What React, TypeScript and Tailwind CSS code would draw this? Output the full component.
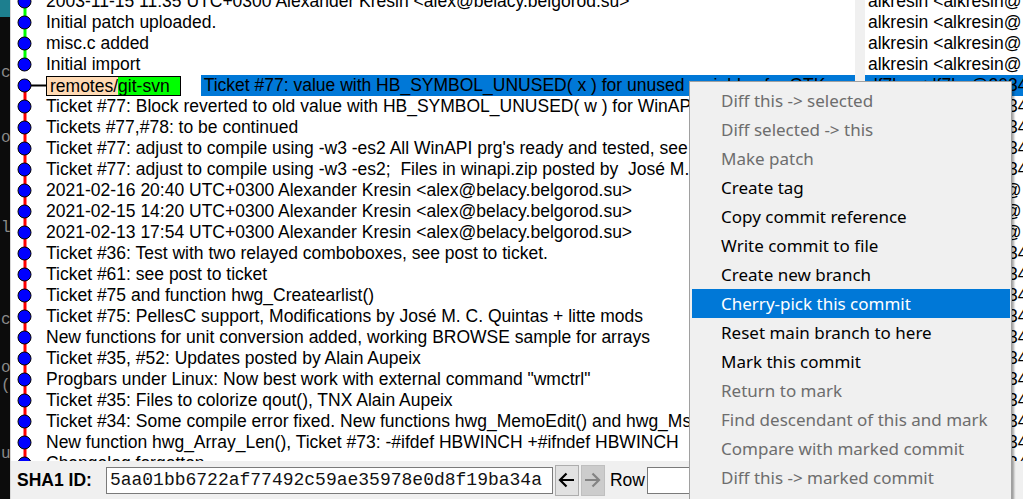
import React from "react";

type Kind = "green" | "greenEnd" | "redStart" | "red";

const AK = "alkresin <alkresin@ 7b1c9bd3-8a4c-0410-a8a9-d8a2ec2ab3e0>";
const DF = "df7be <df7be@2034ea8a-0c40-0410-a8a9-d8a2ec2ab3e0>";

const mainRows: { text: string; kind: Kind; author: string }[] = [
  { text: "2003-11-15 11:35 UTC+0300 Alexander Kresin <alex@belacy.belgorod.su>", kind: "green", author: AK },
  { text: "Initial patch uploaded.", kind: "green", author: AK },
  { text: "misc.c added", kind: "green", author: AK },
  { text: "Initial import", kind: "greenEnd", author: AK },
  { text: "Ticket #77: value with HB_SYMBOL_UNUSED( x ) for unused variables for GTK", kind: "redStart", author: DF },
  { text: "Ticket #77: Block reverted to old value with HB_SYMBOL_UNUSED( w ) for WinAPI, it is not working", kind: "red", author: DF },
  { text: "Tickets #77,#78: to be continued", kind: "red", author: DF },
  { text: "Ticket #77: adjust to compile using -w3 -es2 All WinAPI prg's ready and tested, see ticket", kind: "red", author: DF },
  { text: "Ticket #77: adjust to compile using -w3 -es2;  Files in winapi.zip posted by  José M. C. Quintas", kind: "red", author: DF },
  { text: "2021-02-16 20:40 UTC+0300 Alexander Kresin <alex@belacy.belgorod.su>", kind: "red", author: AK },
  { text: "2021-02-15 14:20 UTC+0300 Alexander Kresin <alex@belacy.belgorod.su>", kind: "red", author: AK },
  { text: "2021-02-13 17:54 UTC+0300 Alexander Kresin <alex@belacy.belgorod.su>", kind: "red", author: AK },
  { text: "Ticket #36: Test with two relayed comboboxes, see post to ticket.", kind: "red", author: DF },
  { text: "Ticket #61: see post to ticket", kind: "red", author: DF },
  { text: "Ticket #75 and function hwg_Createarlist()", kind: "red", author: DF },
  { text: "Ticket #75: PellesC support, Modifications by José M. C. Quintas + litte mods", kind: "red", author: DF },
  { text: "New functions for unit conversion added, working BROWSE sample for arrays", kind: "red", author: DF },
  { text: "Ticket #35, #52: Updates posted by Alain Aupeix", kind: "red", author: DF },
  { text: "Progbars under Linux: Now best work with external command \"wmctrl\"", kind: "red", author: DF },
  { text: "Ticket #35: Files to colorize qout(), TNX Alain Aupeix", kind: "red", author: DF },
  { text: "Ticket #34: Some compile error fixed. New functions hwg_MemoEdit() and hwg_MsgYesNoCancel()", kind: "red", author: DF },
  { text: "New function hwg_Array_Len(), Ticket #73: -#ifdef HBWINCH +#ifndef HBWINCH", kind: "red", author: DF },
  { text: "Changelog forgotten", kind: "red", author: DF },
];

const menuItems: { label: string; enabled: boolean; active?: boolean }[] = [
  { label: "Diff this -> selected", enabled: false },
  { label: "Diff selected -> this", enabled: false },
  { label: "Make patch", enabled: false },
  { label: "Create tag", enabled: true },
  { label: "Copy commit reference", enabled: true },
  { label: "Write commit to file", enabled: true },
  { label: "Create new branch", enabled: true },
  { label: "Cherry-pick this commit", enabled: true, active: true },
  { label: "Reset main branch to here", enabled: true },
  { label: "Mark this commit", enabled: true },
  { label: "Return to mark", enabled: false },
  { label: "Find descendant of this and mark", enabled: false },
  { label: "Compare with marked commit", enabled: false },
  { label: "Diff this -> marked commit", enabled: false },
];

const termLines: { h: number; t?: string }[] = [
  { h: 48 },
  { h: 18, t: "cl" },
  { h: 47 },
  { h: 16, t: "o)" },
  { h: 74 },
  { h: 16, t: "l" },
  { h: 76 },
  { h: 14, t: "c" },
  { h: 34 },
  { h: 18, t: "ol" },
  { h: 18, t: "(" },
  { h: 50 },
  { h: 18, t: "u" },
];

function Graph({ kind }: { kind: Kind }) {
  return (
    <svg width="35" height="21" viewBox="0 0 35 21" className="shrink-0 block">
      {kind === "green" && <line x1="14" y1="0" x2="14" y2="21" stroke="#00ff00" strokeWidth="3" />}
      {kind === "greenEnd" && <line x1="14" y1="0" x2="14" y2="10.5" stroke="#00ff00" strokeWidth="3" />}
      {kind === "red" && <line x1="14" y1="0" x2="14" y2="21" stroke="#ff0000" strokeWidth="3" />}
      {kind === "redStart" && (
        <>
          <line x1="14" y1="10.5" x2="14" y2="21" stroke="#ff0000" strokeWidth="3" />
          <line x1="14" y1="10.5" x2="35" y2="10.5" stroke="#000000" strokeWidth="2" />
        </>
      )}
      <circle cx="13.5" cy="10.5" r="6.5" fill="#0000ff" stroke="#000000" strokeWidth="1" />
    </svg>
  );
}

export default function App() {
  return (
    <div className="w-[1023px] h-[499px] flex overflow-hidden bg-[#f0f0f0] font-['Liberation_Sans',Arial,sans-serif] text-black">
      {/* background terminal strip */}
      <div className="w-[10px] shrink-0 bg-[#0c0c0c] flex flex-col overflow-hidden">
        <div className="h-[17px] shrink-0 bg-[#1d7f8f]" />
        {termLines.map((l, i) => (
          <div
            key={i}
            style={{ height: l.h }}
            className="shrink-0 overflow-hidden whitespace-nowrap text-[#8a8a8a] font-['Liberation_Mono',monospace] text-[16px] leading-[16px] pl-[1px]"
          >
            {l.t ?? ""}
          </div>
        ))}
      </div>

      {/* window */}
      <div className="flex-1 flex flex-col border-l border-[#d8d8d8] relative min-w-0">
        <div className="flex-1 min-h-0 flex">
          {/* commit list */}
          <div className="w-[844px] shrink-0 bg-white overflow-hidden">
            <div className="mt-[-9px] flex flex-col">
              {mainRows.map((r, i) => (
                <div key={i} className="h-[21px] flex items-center text-[17.5px] leading-[21px] whitespace-pre">
                  <Graph kind={r.kind} />
                  {r.kind === "redStart" ? (
                    <>
                      <div className="h-[20px] flex border border-black leading-[18px]">
                        <span className="bg-[#ffdab4] pl-[3px]">remotes/</span>
                        <span className="bg-[#00ff00] pr-[10px]">git-svn</span>
                      </div>
                      <div className="ml-[20px] flex-1 h-[21px] bg-[#0078d7] pl-[3px]">{r.text}</div>
                    </>
                  ) : (
                    <span>{r.text}</span>
                  )}
                </div>
              ))}
            </div>
          </div>
          <div className="w-[10px] shrink-0 bg-[#f0f0f0]" />
          {/* author column */}
          <div className="flex-1 min-w-0 bg-white overflow-hidden">
            <div className="mt-[-9px] flex flex-col">
              {mainRows.map((r, i) => (
                <div
                  key={i}
                  className={
                    "h-[21px] text-[17.5px] leading-[21px] whitespace-pre pl-[3px] " +
                    (r.kind === "redStart" ? "bg-[#0078d7]" : "")
                  }
                >
                  {r.author}
                </div>
              ))}
            </div>
          </div>
        </div>

        {/* bottom bar */}
        <div className="h-[38px] shrink-0 bg-[#f0f0f0] flex items-center">
          <span className="ml-[6px] font-bold text-[17.5px] whitespace-nowrap">SHA1 ID:</span>
          <div className="ml-[14px] w-[447px] h-[27px] bg-white border border-[#7a7a7a] flex items-center pl-[3px] font-['Liberation_Mono',monospace] text-[18px] text-[#111] whitespace-nowrap overflow-hidden">
            5aa01bb6722af77492c59ae35978e0d8f19ba34a
          </div>
          <div className="ml-[2px] w-[24px] h-[31px] bg-[#e1e1e1] border border-[#adadad] flex items-center justify-center">
            <svg width="17" height="16" viewBox="0 0 17 16">
              <path d="M16 8H2.5M8.5 1.5L2 8l6.5 6.5" stroke="#000" strokeWidth="2.2" fill="none" />
            </svg>
          </div>
          <div className="ml-[2px] w-[24px] h-[31px] bg-[#cccccc] border border-[#bfbfbf] flex items-center justify-center">
            <svg width="17" height="16" viewBox="0 0 17 16">
              <path d="M1 8h13.5M8.5 1.5L15 8l-6.5 6.5" stroke="#838383" strokeWidth="2.2" fill="none" />
            </svg>
          </div>
          <span className="ml-[5px] text-[17.5px]">Row</span>
          <div className="ml-[2px] w-[80px] h-[27px] bg-white border border-[#7a7a7a]" />
        </div>

        {/* context menu */}
        <div className="absolute left-[678px] top-[81px] w-[323px] h-[440px] bg-[#f0f0f0] border border-[#a0a0a0] shadow-[2px_2px_2px_rgba(0,0,0,0.35)] pt-[4px] pl-[2px] pr-[1px] font-['Noto_Sans',sans-serif] text-[17px]">
          {menuItems.map((m, i) => (
            <div
              key={i}
              className={
                "h-[29px] flex items-center pl-[29px] whitespace-nowrap " +
                (m.active ? "bg-[#0078d7] text-white" : m.enabled ? "text-black" : "text-[#6d6d6d]")
              }
            >
              {m.label}
            </div>
          ))}
        </div>
      </div>
    </div>
  );
}
